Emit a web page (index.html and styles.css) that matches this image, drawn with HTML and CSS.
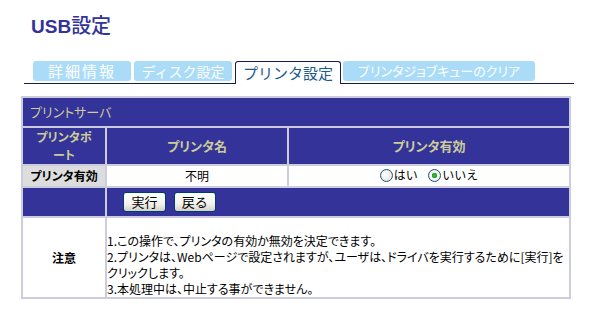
FILE: index.html
```html
<!DOCTYPE html>
<html lang="ja">
<head>
  <meta charset="UTF-8" />
  <title>USB設定</title>
  <link rel="stylesheet" href="styles.css">
</head>
<body>
  <div class="page">
    <h1 class="title"><span class="latin">USB</span>設定</h1>

    <div class="tabs">
      <div class="tab tab-info">詳細情報</div>
      <div class="tab tab-disk">ディスク設定</div>
      <div class="tab tab-printer active">プリンタ設定</div>
      <div class="tab tab-queue">プリンタジョブキューのクリア</div>
    </div>

    <table class="panel">
      <colgroup>
        <col class="col-label">
        <col class="col-name">
        <col class="col-state">
      </colgroup>
      <tr class="row-caption">
        <td colspan="3" class="caption">プリントサーバ</td>
      </tr>
      <tr class="row-head">
        <th class="port">プリンタポ<br>ート</th>
        <th>プリンタ名</th>
        <th>プリンタ有効</th>
      </tr>
      <tr class="row-data">
        <td class="label">プリンタ有効</td>
        <td class="center">不明</td>
        <td class="center">
          <label class="choice"><input type="radio" name="enable" value="1">はい</label>
          <label class="choice"><input type="radio" name="enable" value="0" checked>いいえ</label>
        </td>
      </tr>
      <tr class="row-actions">
        <td></td>
        <td colspan="2" class="actions">
          <button class="btn btn-run">実行</button>
          <button class="btn">戻る</button>
        </td>
      </tr>
      <tr class="row-notes">
        <td class="label-plain">注意</td>
        <td colspan="2" class="notes">
          1.この操作で、プリンタの有効か無効を決定できます。<br>
          2.プリンタは、Webページで設定されますが、ユーザは、ドライバを実行するために[実行]をクリックします。<br>
          3.本処理中は、中止する事ができません。
        </td>
      </tr>
    </table>
  </div>
</body>
</html>
```

FILE: styles.css
```css
body {
  margin: 0;
  background-color: #ffffff;
  font-family: "Noto Sans CJK JP", sans-serif;
  font-size: 12px;
  color: #000;
}

.page {
  padding: 11px 0 0 21px;
  width: 553px;
}

.title {
  margin: 0 0 0 10px;
  height: 28px;
  font-size: 20px;
  line-height: 28px;
  font-weight: 500;
  color: #333399;
  font-feature-settings: "palt";
}

.title .latin {
  font-family: "Liberation Sans", sans-serif;
  font-weight: bold;
  font-size: 19px;
}

/* tabs */
.tabs {
  display: flex;
  align-items: flex-end;
  margin: 22px 0 12px 3px;
  height: 22px;
  border-bottom: 1px solid #1a1a55;
}

.tab {
  height: 20px;
  margin-bottom: 2px;
  margin-right: 3px;
  background-color: #aadcf7;
  color: #ffffff;
  border-radius: 3px;
  display: flex;
  align-items: center;
  justify-content: center;
  font-size: 15px;
  line-height: 20px;
  white-space: nowrap;
}

.tab-info {
  margin-left: 9px;
  width: 98px;
  letter-spacing: 2px;
}

.tab-disk {
  width: 98px;
  font-size: 14px;
}

.tab-printer {
  width: 104px;
  font-size: 15px;
}

.tab-queue {
  width: 192px;
  font-size: 13px;
  font-feature-settings: "palt";
}

.tab.active {
  height: 22px;
  margin-bottom: -1px;
  margin-right: 2px;
  background-color: #ffffff;
  color: #1b5a8c;
  border: 1px solid #1a1a55;
  border-bottom: none;
  border-radius: 3px 3px 0 0;
}

/* panel table */
.panel {
  width: 550px;
  border-spacing: 2px;
  background-color: #ccccdd;
  table-layout: fixed;
}

.col-label { width: 82px; }
.col-name { width: 180px; }
.col-state { width: 280px; }

.panel td,
.panel th {
  padding: 0;
  vertical-align: middle;
  line-height: 16px;
}

.row-caption td,
.row-head th,
.row-actions td {
  background-color: #333399;
  color: #cccc99;
}

.row-caption td {
  height: 28px;
}

.caption {
  padding-left: 7px !important;
  font-size: 13px;
  font-feature-settings: "palt";
}

.row-head th {
  height: 36px;
  font-size: 13px;
  line-height: 18px;
  font-weight: bold;
  font-feature-settings: "palt";
}

.row-head .port {
  font-size: 12px;
}

.row-data td {
  height: 20px;
  background-color: #ffffff;
}

.center {
  text-align: center;
}

.row-data .label {
  background-color: #dddddd;
  font-weight: bold;
  text-align: center;
  font-feature-settings: "palt";
}

.choice {
  display: inline-flex;
  align-items: center;
  margin: 0 4px;
}

.choice input {
  appearance: none;
  width: 13px;
  height: 13px;
  margin: 0 1px 0 0;
  border: 1px solid #1c5180;
  border-radius: 50%;
  background: radial-gradient(circle at 40% 40%, #ffffff, #dcdcd4);
  box-sizing: border-box;
}

.choice input:checked {
  background: radial-gradient(circle, #3fbf3f 0, #25a025 2.5px, #ffffff 3px, #dcdcd4 100%);
}

.row-actions td {
  height: 28px;
}

.actions {
  padding-left: 16px !important;
}

.btn {
  height: 20px;
  padding: 0 7px;
  margin-right: 5px;
  font-family: "Noto Sans CJK JP", sans-serif;
  font-size: 13px;
  line-height: 16px;
  color: #000;
  border: 1px solid #003c74;
  border-radius: 3px;
  background: linear-gradient(#ffffff, #f3f3ee 60%, #d6d0c5);
  cursor: pointer;
}

.btn-run {
  width: 43px;
}

.row-notes td {
  height: 79px;
  background-color: #ffffff;
}

.label-plain {
  font-weight: bold;
  text-align: center;
}

.row-notes .notes {
  height: 64px;
  vertical-align: top;
  padding-top: 15px;
  font-feature-settings: "palt";
}
```
